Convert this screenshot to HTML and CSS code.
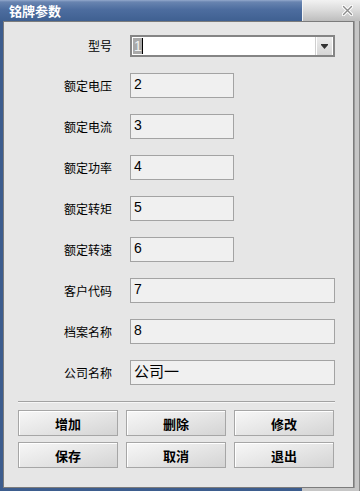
FILE: index.html
```html
<!DOCTYPE html>
<html lang="zh">
<head>
<meta charset="utf-8">
<title>铭牌参数</title>
<link rel="stylesheet" href="styles.css">
</head>
<body>
<div class="window">
  <div class="titlebar">
    <div class="title">铭牌参数</div>
    <div class="title-tail">
      <svg class="close" width="11" height="11" viewBox="0 0 11 11">
        <path d="M1.5 1.5 L9.5 9.5 M9.5 1.5 L1.5 9.5" stroke="#ffffff" stroke-width="3.2" stroke-linecap="round"/>
        <path d="M1.5 1.5 L9.5 9.5 M9.5 1.5 L1.5 9.5" stroke="#8c8c8c" stroke-width="1.4" stroke-linecap="round"/>
      </svg>
    </div>
  </div>
  <div class="frame">
    <div class="panel">
      <div class="form">
        <div class="lbl">型号</div>
        <div class="combo">
          <div class="combo-text"><span class="sel">1</span><span class="caret"></span></div>
          <div class="combo-btn">
            <svg width="7" height="5" viewBox="0 0 7 5"><rect x="0" y="0" width="7" height="1" fill="#333"/><path d="M0 1 H7 L3.5 5 Z" fill="#333"/></svg>
          </div>
        </div>

        <div class="lbl">额定电压</div>
        <div class="field short">2</div>

        <div class="lbl">额定电流</div>
        <div class="field short">3</div>

        <div class="lbl">额定功率</div>
        <div class="field short">4</div>

        <div class="lbl">额定转矩</div>
        <div class="field short">5</div>

        <div class="lbl">额定转速</div>
        <div class="field short">6</div>

        <div class="lbl">客户代码</div>
        <div class="field">7</div>

        <div class="lbl">档案名称</div>
        <div class="field">8</div>

        <div class="lbl">公司名称</div>
        <div class="field big">公司一</div>
      </div>
      <div class="sep"></div>
      <div class="buttons">
        <div class="btn">增加</div>
        <div class="btn">删除</div>
        <div class="btn">修改</div>
        <div class="btn">保存</div>
        <div class="btn">取消</div>
        <div class="btn">退出</div>
      </div>
    </div>
  </div>
</div>
</body>
</html>
```

FILE: styles.css
```css
html, body {
  margin: 0;
  padding: 0;
  background: #e6e6e6;
}

.window {
  width: 360px;
  height: 491px;
  display: flex;
  flex-direction: column;
  font-family: "Noto Sans CJK SC", sans-serif;
  overflow: hidden;
}

.titlebar {
  height: 21px;
  display: flex;
  flex: none;
}

.title {
  width: 302px;
  box-sizing: border-box;
  padding-left: 9px;
  background: linear-gradient(#93a9cc 0, #6884b0 2px, #4d6d9f 45%, #3f6091 100%);
  color: #ffffff;
  font-weight: bold;
  font-size: 13px;
  line-height: 21px;
}

.title-tail {
  flex: 1;
  border-left: 1px solid #f4f4f4;
  background: linear-gradient(#f2f2f2 0, #dcdcdc 45%, #bdbdbd 100%);
  display: flex;
  justify-content: flex-end;
  align-items: flex-start;
  padding: 5px 7px 0 0;
}

.frame {
  flex: 1;
  display: flex;
  padding: 0 5px 3px 3px;
  background: linear-gradient(to right, #3d5d8e 302px, #c6c6c6 302px);
  border-right: 1px solid #8a8a8a;
}

.panel {
  flex: 1;
  background: #e6e6e6;
  border: 1px solid #7c7c7c;
  box-shadow: 1px 0 0 #9a9a9a;
  display: flex;
  flex-direction: column;
}

.form {
  display: grid;
  grid-template-columns: 126px 205px;
  row-gap: 16px;
  padding-top: 13px;
  align-items: center;
}

.lbl {
  text-align: right;
  padding-right: 18px;
  font-size: 12px;
  line-height: 16px;
  color: #000;
}

.combo {
  height: 22px;
  box-sizing: border-box;
  border: 2px solid #858585;
  background: #ffffff;
  display: flex;
}

.combo-text {
  flex: 1;
  display: flex;
  align-items: center;
  padding-left: 1px;
}

.sel {
  background: #a9a9a9;
  color: #f2f2f2;
  font-family: "Liberation Sans", sans-serif;
  font-size: 14px;
  line-height: 16px;
  padding: 0 1px;
  width: 7px;
}

.caret {
  width: 1px;
  height: 16px;
  background: #000;
}

.combo-btn {
  width: 15px;
  margin: 0 1px 0 0;
  border-left: 1px solid #ffffff;
  background: linear-gradient(#ececec, #d6d6d6);
  box-shadow: -1px 0 0 #cfcfcf;
  display: flex;
  align-items: center;
  justify-content: center;
}

.field {
  height: 25px;
  box-sizing: border-box;
  border: 1px solid #a3a3a3;
  background: #f0f0f0;
  padding: 1px 3px 0 3px;
  font-family: "Liberation Sans", "Noto Sans CJK SC", sans-serif;
  font-size: 14px;
  line-height: 19px;
  color: #000;
}

.field.short {
  width: 104px;
}

.field.big {
  font-family: "Noto Sans CJK SC", sans-serif;
  font-size: 15px;
  line-height: 20px;
  padding-top: 0;
}

.sep {
  height: 1px;
  margin: 16px 18px 0 14px;
  background: #a2a2a2;
  border-bottom: 1px solid #f6f6f6;
}

.buttons {
  display: grid;
  grid-template-columns: repeat(3, 100px);
  grid-auto-rows: 26px;
  column-gap: 8px;
  row-gap: 6px;
  margin: 7px 0 0 14px;
}

.btn {
  box-sizing: border-box;
  border: 1px solid #a6a6a6;
  background: linear-gradient(165deg, #f7f7f7 0%, #e6e6e6 50%, #d4d4d4 100%);
  box-shadow: inset 1px 1px 0 #ffffff;
  display: flex;
  align-items: center;
  justify-content: center;
  font-weight: bold;
  font-size: 13px;
  color: #000;
}
```
